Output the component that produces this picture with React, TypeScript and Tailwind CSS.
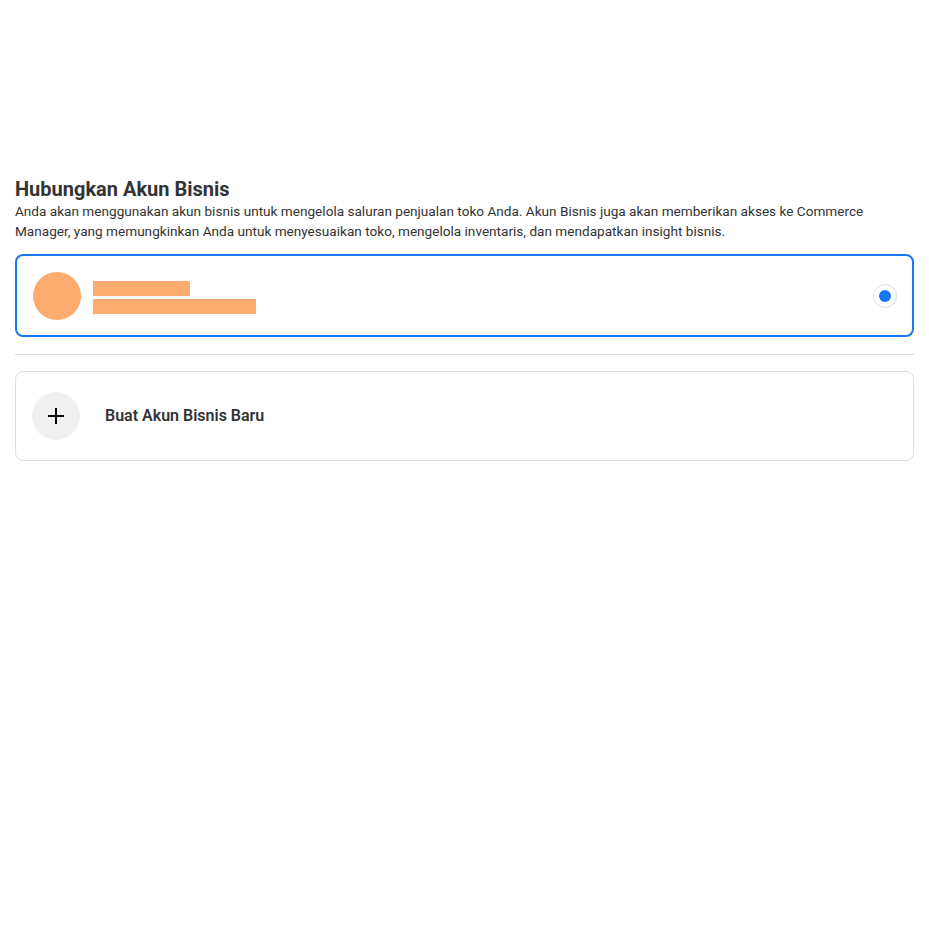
export default function App() {
  return (
    <div className="min-h-[929px] w-full bg-white" style={{ fontFamily: "Roboto, 'Liberation Sans', sans-serif" }}>
      <div className="px-[15px] pt-[178px]">
        <h1 className="text-[20px] font-bold leading-[23px] text-[#333]">Hubungkan Akun Bisnis</h1>
        <p className="text-[13.6px] leading-[20px] text-[#333]">
          Anda akan menggunakan akun bisnis untuk mengelola saluran penjualan toko Anda. Akun Bisnis juga akan memberikan akses ke Commerce Manager, yang memungkinkan Anda untuk menyesuaikan toko, mengelola inventaris, dan mendapatkan insight bisnis.
        </p>
        <div className="mt-[13px] flex h-[83px] items-center rounded-[8px] border-2 border-[#1877f2] pl-[16px] pr-[15px]">
          <div className="h-[48px] w-[48px] rounded-full bg-[#fdab6f]" />
          <div className="ml-[12px] flex flex-col gap-[3px] pt-[3px]">
            <div className="h-[15px] w-[97px] bg-[#fdab6f]" />
            <div className="h-[15px] w-[163px] bg-[#fdab6f]" />
          </div>
          <div className="ml-auto flex h-[24px] w-[24px] items-center justify-center rounded-full border border-[#dadde1]">
            <div className="h-[12px] w-[12px] rounded-full bg-[#1877f2]" />
          </div>
        </div>
        <div className="mt-[17px] h-px bg-[#dadde1]" />
        <div className="mt-[16px] flex h-[90px] items-center rounded-[8px] border border-[#dadde1] pl-[16px]">
          <div className="flex h-[48px] w-[48px] items-center justify-center rounded-full bg-[#f0f0f0]">
            <svg width="18" height="18" viewBox="0 0 18 18" fill="none" stroke="#000" strokeWidth="2">
              <path d="M9 1v16M1 9h16" />
            </svg>
          </div>
          <span className="ml-[25px] text-[16px] font-semibold text-[#333]">Buat Akun Bisnis Baru</span>
        </div>
      </div>
    </div>
  );
}
